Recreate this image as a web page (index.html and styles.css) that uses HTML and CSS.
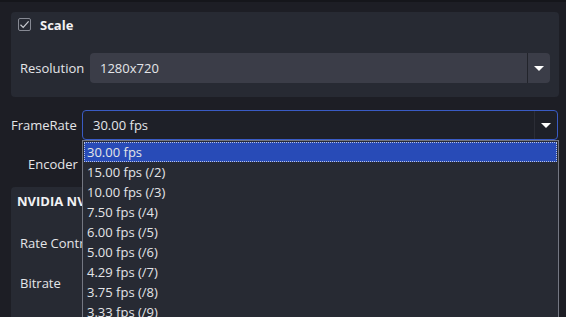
FILE: index.html
```html
<!DOCTYPE html>
<html lang="en">

<head>
    <meta charset="UTF-8">
    <meta name="viewport" content="width=device-width, initial-scale=1.0">
    <title>Output Settings</title>
    <link rel="stylesheet" href="styles.css">
</head>

<body>
    <div class="page">
        <div class="group scale-group">
            <label class="check-row">
                <span class="checkbox">
                    <svg width="11" height="11" viewBox="0 0 11 11">
                        <path d="M1.5 5.8 L4.2 8.4 L9.6 2.4" fill="none" stroke="#c9cbd1" stroke-width="1.2" />
                    </svg>
                </span>
                <span class="check-label">Scale</span>
            </label>
            <div class="form-row res-row">
                <span class="label">Resolution</span>
                <div class="combo combo-light">
                    <span class="combo-value">1280x720</span>
                    <span class="combo-arrow"><span class="tri"></span></span>
                </div>
            </div>
        </div>

        <div class="form-row fps-row">
            <span class="label">FrameRate</span>
            <div class="combo combo-open">
                <span class="combo-value">30.00 fps</span>
                <span class="combo-arrow"><span class="tri"></span></span>
                <ul class="popup">
                    <li class="selected">30.00 fps</li>
                    <li>15.00 fps (/2)</li>
                    <li>10.00 fps (/3)</li>
                    <li>7.50 fps (/4)</li>
                    <li>6.00 fps (/5)</li>
                    <li>5.00 fps (/6)</li>
                    <li>4.29 fps (/7)</li>
                    <li>3.75 fps (/8)</li>
                    <li>3.33 fps (/9)</li>
                </ul>
            </div>
        </div>

        <div class="form-row enc-row">
            <span class="label">Encoder</span>
            <div class="combo combo-dark"></div>
        </div>

        <div class="group nv-group">
            <div class="group-title">NVIDIA NVENC H.264</div>
            <div class="sub-rows">
                <div class="form-row sub-row">
                    <span class="label">Rate Control</span>
                </div>
                <div class="form-row sub-row">
                    <span class="label">Bitrate</span>
                </div>
            </div>
        </div>
    </div>
</body>

</html>
```

FILE: styles.css
```css
:root {
    --bg: #1d1e25;
    --panel: #272a33;
    --combo: #3b3d48;
    --text: #e4e5e8;
    --accent: #3a5bc4;
    --select: #284bb7;
}

html,
body {
    margin: 0;
    padding: 0;
    background-color: var(--bg);
    font-family: "Open Sans", "Noto Sans", sans-serif;
    font-size: 13px;
    color: var(--text);
    overflow: hidden;
}

.page {
    border-top: 2px solid #15161b;
    padding: 10px 7px 0 11px;
    height: 317px;
    box-sizing: border-box;
    overflow: hidden;
}

.group {
    background-color: var(--panel);
    border-radius: 4px;
}

.scale-group {
    height: 85px;
    padding: 5px 9px 0 7px;
    box-sizing: border-box;
}

.check-row {
    display: flex;
    align-items: center;
    height: 15px;
}

.checkbox {
    width: 11px;
    height: 11px;
    border: 1px solid #868993;
    border-radius: 2px;
    display: flex;
    align-items: center;
    justify-content: center;
}

.check-label {
    margin-left: 9px;
    font-weight: bold;
    font-size: 13px;
    color: #f2f2f4;
}

.form-row {
    display: flex;
    align-items: center;
}

.label {
    white-space: nowrap;
}

.res-row {
    margin-top: 21px;
    margin-left: 2px;
}

.res-row .label {
    width: 70px;
}

.combo {
    flex: 1;
    height: 30px;
    box-sizing: border-box;
    border-radius: 4px;
    display: flex;
    align-items: center;
    position: relative;
}

.combo-light {
    background-color: var(--combo);
}

.combo-value {
    flex: 1;
    padding-left: 10px;
}

.combo-arrow {
    width: 22px;
    height: 100%;
    border-left: 1px solid #22242b;
    display: flex;
    align-items: center;
    justify-content: center;
}

.tri {
    width: 0;
    height: 0;
    border-left: 5px solid transparent;
    border-right: 5px solid transparent;
    border-top: 5px solid #ffffff;
}

.fps-row {
    margin-top: 13px;
    margin-right: 1px;
}

.fps-row .label {
    width: 71px;
}

.combo-open {
    background-color: #1e2028;
    border: 1px solid var(--accent);
}

.combo-open .combo-arrow {
    border-left-color: #2b2d36;
}

.popup {
    position: absolute;
    left: -1px;
    top: 29px;
    right: -2px;
    height: 200px;
    margin: 0;
    padding: 1px;
    list-style: none;
    background-color: var(--panel);
    border: 1px solid #747782;
    box-sizing: border-box;
    z-index: 2;
}

.popup li {
    height: 20px;
    line-height: 20px;
    padding-left: 3px;
    white-space: nowrap;
}

.popup li.selected {
    background-color: var(--select);
    outline: 1px dotted #b9c3e2;
    outline-offset: -1px;
}

.enc-row {
    margin-top: 9px;
}

.enc-row .label {
    width: 54px;
    padding-left: 17px;
}

.combo-dark {
    background-color: var(--combo);
}

.nv-group {
    margin-top: 8px;
    height: 140px;
    padding: 5px 6px 0;
}

.group-title {
    font-weight: bold;
    color: #f2f2f4;
}

.sub-rows {
    margin-top: 13px;
}

.sub-row {
    height: 40px;
    padding-left: 3px;
}
```
